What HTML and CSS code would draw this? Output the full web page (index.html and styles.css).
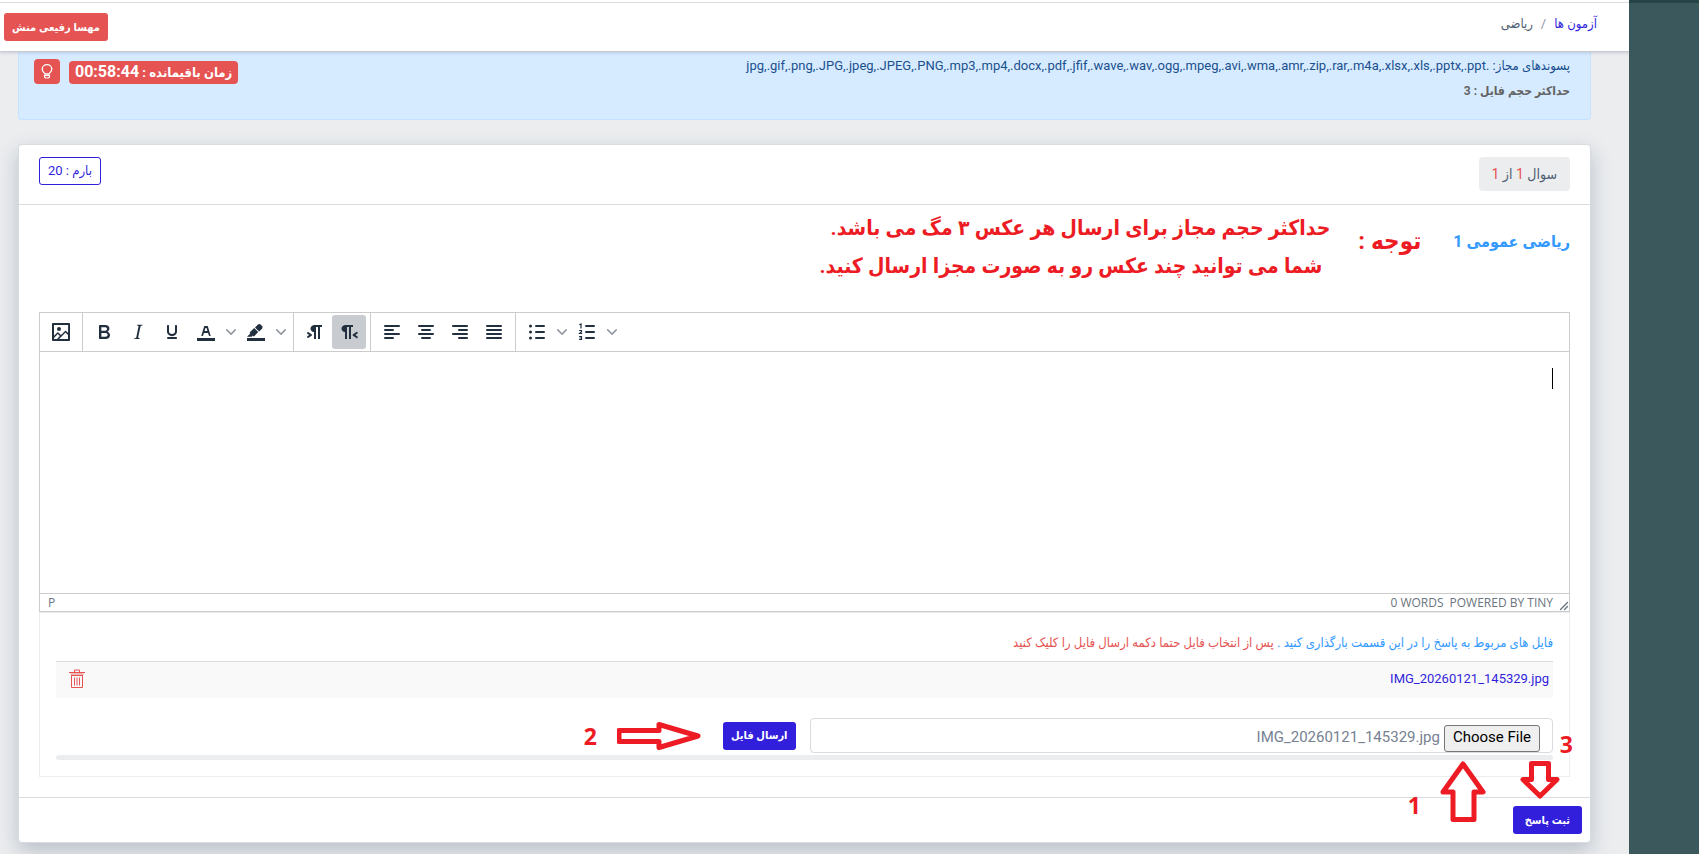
FILE: index.html
```html
<!DOCTYPE html>
<html lang="fa" dir="rtl">
<head>
<meta charset="utf-8">
<title>ریاضی</title>
<link rel="stylesheet" href="styles.css">
</head>
<body>
<div class="page">
  <aside class="side"></aside>
  <div class="main">
    <header class="topbar">
      <nav class="crumbs">
        <a href="#">آزمون ها</a><span class="crumb-sep">/</span><span class="crumb-now">ریاضی</span>
      </nav>
      <button class="btn btn-danger user-btn" type="button">مهسا رفیعی منش</button>
    </header>

    <main class="content">
      <section class="alert">
        <div class="alert-text">
          <p class="exts">پسوندهای مجاز: <bdo dir="ltr">jpg,.gif,.png,.JPG,.jpeg,.JPEG,.PNG,.mp3,.mp4,.docx,.pdf,.jfif,.wave,.wav,.ogg,.mpeg,.avi,.wma,.amr,.zip,.rar,.m4a,.xlsx,.xls,.pptx,.ppt.</bdo></p>
          <p class="max-size">حداکثر حجم فایل : 3</p>
        </div>
        <div class="alert-tools">
          <strong class="timer">زمان باقیمانده : <span class="clock">00:58:44</span></strong>
          <button class="btn-danger bulb" type="button" aria-label="راهنما">
            <svg width="12" height="16" viewBox="0 0 12 16" fill="none" stroke="currentColor"><path d="M4 10C4 8.700 1.200 8.300 1.200 5.200A4.800 4.500 0 0 1 10.800 5.200C10.800 8.300 8 8.700 8 10Z" stroke-width="1.300"/><path d="M3.500 11.500h5v1.500l-1 1h-3l-1-1z" stroke-width="1.200"/></svg>
          </button>
        </div>
      </section>

      <section class="card">
        <div class="card-head">
          <span class="counter">سوال <b>1</b> از <b>1</b></span>
          <span class="score">بارم : 20</span>
        </div>

        <div class="card-body">
          <div class="question">
            <h1 class="question-title">ریاضی عمومی 1</h1>
            <strong class="notice-label">توجه :</strong>
            <p class="notice">حداکثر حجم مجاز برای ارسال هر عکس ۳ مگ می باشد.<br><span class="notice-second">شما می توانید چند عکس رو به صورت مجزا ارسال کنید.</span></p>
          </div>

          <div class="editor">
            <div class="toolbar" dir="ltr">
              <div class="group">
                <button class="tool" type="button" aria-label="Image"><svg class="ico" viewBox="0 0 24 24"><path d="m5 15.700 3.300-3.200c.3-.3.7-.3 1 0L12 15l4.100-4c.3-.4.8-.4 1 0l2 1.900V5H5v10.700ZM5 18V19h3l2.800-2.900-2-2L5 17.900Zm14-3-2.500-2.400-6.400 6.500H19v-4ZM4 3h16c.6 0 1 .4 1 1v16c0 .6-.4 1-1 1H4a1 1 0 0 1-1-1V4c0-.6.4-1 1-1Zm6 8a2 2 0 1 0 0-4 2 2 0 0 0 0 4Z"/></svg></button>
              </div>
              <div class="group">
                <button class="tool" type="button" aria-label="Bold"><svg class="ico" viewBox="0 0 24 24"><path fill-rule="evenodd" d="M7.800 19c-.3 0-.5 0-.6-.2l-.2-.5V5.700c0-.2 0-.4.2-.5l.6-.2h5c1.500 0 2.700.3 3.500 1 .7.6 1.100 1.400 1.100 2.500a3 3 0 0 1-.6 1.900c-.4.6-1 1-1.600 1.200.4.1.9.3 1.300.6s.8.7 1 1.200c.4.4.5 1 .5 1.600 0 1.300-.4 2.300-1.300 3-.8.7-2.100 1-3.800 1H7.800Zm5-8.300c.6 0 1.200-.1 1.600-.5.4-.3.6-.7.6-1.300 0-1.100-.8-1.700-2.300-1.700H9.300v3.500h3.400Zm.5 6c.7 0 1.300-.1 1.700-.4.4-.4.6-.9.6-1.500s-.2-1-.7-1.400c-.4-.3-1-.4-2-.4H9.400v3.800h4Z"/></svg></button>
                <button class="tool" type="button" aria-label="Italic"><svg class="ico" viewBox="0 0 24 24"><path d="m16.700 4.700-.1.900h-.3c-.6 0-1 0-1.400.3-.3.3-.4.6-.5 1.100l-2.100 9.800v.6c0 .5.4.8 1.400.8h.2l-.2.800H8l.2-.8h.2c1.100 0 1.800-.5 2-1.500l2-9.800.1-.5c0-.6-.4-.8-1.400-.8h-.3l.2-.9h5.800Z"/></svg></button>
                <button class="tool" type="button" aria-label="Underline"><svg class="ico" viewBox="0 0 24 24"><path d="M16 5c.6 0 1 .4 1 1v5.500a4 4 0 0 1-.4 1.800l-1 1.400a5.300 5.300 0 0 1-5.500 1 5 5 0 0 1-1.600-1c-.5-.4-.8-.9-1.100-1.400a4 4 0 0 1-.4-1.800V6c0-.6.4-1 1-1s1 .4 1 1v5.500c0 .3 0 .6.2 1l.6.700a3.300 3.300 0 0 0 2.200.800 3.400 3.400 0 0 0 2.200-.8c.3-.2.4-.5.6-.8l.2-.9V6c0-.6.4-1 1-1ZM8 17h8c.6 0 1 .4 1 1s-.4 1-1 1H8a1 1 0 0 1 0-2Z"/></svg></button>
                <button class="tool" type="button" aria-label="Text color"><svg class="ico" viewBox="0 0 24 24"><path d="M3 18h18v3H3z"/><path fill-rule="evenodd" d="M8.700 16h-.8a.5.5 0 0 1-.5-.6l2.700-9c.1-.3.3-.4.5-.4h2.800c.2 0 .4.1.5.4l2.700 9a.5.5 0 0 1-.5.6h-.8a.5.5 0 0 1-.4-.4l-.7-2.200c0-.3-.3-.4-.5-.4h-3.400c-.2 0-.4.1-.5.4l-.7 2.200c0 .3-.2.4-.4.4Zm2.600-7.600-.6 2a.5.5 0 0 0 .5.6h1.600a.5.5 0 0 0 .5-.6l-.6-2c0-.3-.3-.4-.5-.4h-.4c-.2 0-.4.1-.5.4Z"/></svg></button>
                <button class="chev" type="button" aria-label="Text color menu"><svg width="10" height="10" viewBox="0 0 10 10"><path d="M8.700 2.200c.3-.3.8-.3 1 0 .4.4.4.9 0 1.200L5.700 7.800c-.3.3-.9.3-1.200 0L.2 3.400a.8.8 0 0 1 0-1.200c.3-.3.8-.3 1.100 0L5 6l3.700-3.800Z"/></svg></button>
                <button class="tool" type="button" aria-label="Highlight"><svg class="ico" viewBox="0 0 24 24"><path d="M3 18h18v3H3z"/><path d="M7.700 16.700H3l3.300-3.300-.7-.8L10.200 8l4 4.100-4 4.200c-.2.2-.6.2-.8 0l-.6-.7-1.100 1.100zm5-7.500L11 7.400l3-2.900a2 2 0 0 1 2.600 0L18 6c.7.7.7 2 0 2.700l-2.900 2.900-1.800-1.800-.5-.6"/></svg></button>
                <button class="chev" type="button" aria-label="Highlight menu"><svg width="10" height="10" viewBox="0 0 10 10"><path d="M8.700 2.200c.3-.3.8-.3 1 0 .4.4.4.9 0 1.200L5.700 7.800c-.3.3-.9.3-1.200 0L.2 3.400a.8.8 0 0 1 0-1.200c.3-.3.8-.3 1.100 0L5 6l3.700-3.800Z"/></svg></button>
              </div>
              <div class="group">
                <button class="tool" type="button" aria-label="Left to right"><svg class="ico" viewBox="0 0 24 24"><path d="M11 5h8v2h-2v12h-2V7h-2v12h-2v-7c-.5 0-1 0-1.400-.3A3.400 3.400 0 0 1 7.800 10a3.300 3.300 0 0 1 0-2.800 3.400 3.400 0 0 1 1.800-1.800L11 5ZM4.400 16.200 6.200 15l-1.800-1.200a1 1 0 0 1 1.200-1.600l3 2a1 1 0 0 1 0 1.600l-3 2a1 1 0 1 1-1.200-1.600Z"/></svg></button>
                <button class="tool tool-on" type="button" aria-pressed="true" aria-label="Right to left"><svg class="ico" viewBox="0 0 24 24"><path d="M8 5h8v2h-2v12h-2V7h-2v12H8v-7c-.5 0-1 0-1.400-.3A3.400 3.400 0 0 1 4.800 10a3.300 3.300 0 0 1 0-2.800 3.400 3.400 0 0 1 1.800-1.800L8 5Zm12 11.200a1 1 0 1 1-1 1.600l-3-2a1 1 0 0 1 0-1.600l3-2a1 1 0 1 1 1 1.600L18.400 15l1.800 1.200Z"/></svg></button>
              </div>
              <div class="group">
                <button class="tool" type="button" aria-label="Align left"><svg class="ico line" viewBox="0 0 24 24"><path d="M5 6h14M5 10h8M5 14h14M5 18h8"/></svg></button>
                <button class="tool" type="button" aria-label="Align center"><svg class="ico line" viewBox="0 0 24 24"><path d="M5 6h14M8 10h8M5 14h14M8 18h8"/></svg></button>
                <button class="tool" type="button" aria-label="Align right"><svg class="ico line" viewBox="0 0 24 24"><path d="M5 6h14M11 10h8M5 14h14M11 18h8"/></svg></button>
                <button class="tool" type="button" aria-label="Justify"><svg class="ico line" viewBox="0 0 24 24"><path d="M5 6h14M5 10h14M5 14h14M5 18h14"/></svg></button>
              </div>
              <div class="group group-last">
                <button class="tool" type="button" aria-label="Bullet list"><svg class="ico line" viewBox="0 0 24 24"><path d="M11 6h8M11 12h8M11 18h8"/><path d="M5.500 6h.01M5.500 12h.01M5.500 18h.01" stroke-width="3"/></svg></button>
                <button class="chev" type="button" aria-label="Bullet list menu"><svg width="10" height="10" viewBox="0 0 10 10"><path d="M8.700 2.200c.3-.3.8-.3 1 0 .4.4.4.9 0 1.200L5.700 7.800c-.3.3-.9.3-1.200 0L.2 3.400a.8.8 0 0 1 0-1.200c.3-.3.8-.3 1.100 0L5 6l3.700-3.800Z"/></svg></button>
                <button class="tool" type="button" aria-label="Numbered list"><svg class="ico line" viewBox="0 0 24 24"><path d="M11 6h8M11 12h8M11 18h8"/><path d="M4.800 4.600 6 4v4M4.500 10.500h2v1.300l-1.800 1.700h2M4.500 16.500h2v3h-2M5 18h1.500" stroke-width="1.200"/></svg></button>
                <button class="chev" type="button" aria-label="Numbered list menu"><svg width="10" height="10" viewBox="0 0 10 10"><path d="M8.700 2.200c.3-.3.8-.3 1 0 .4.4.4.9 0 1.200L5.700 7.800c-.3.3-.9.3-1.200 0L.2 3.400a.8.8 0 0 1 0-1.200c.3-.3.8-.3 1.100 0L5 6l3.700-3.800Z"/></svg></button>
              </div>
            </div>
            <div class="edit-area">
              <textarea class="edit-text" aria-label="پاسخ"></textarea>
              <span class="caret"></span>
            </div>
            <div class="status" dir="ltr">
              <span class="path">P</span>
              <span>0 WORDS</span>
              <a class="brand" href="#">POWERED BY TINY</a>
              <svg class="grip" width="10" height="10" viewBox="0 0 10 10"><path d="M1.500 8.500l7-7M5.500 8.500l3-3" stroke="currentColor" stroke-width="1.400" stroke-linecap="round"/></svg>
            </div>
          </div>

          <div class="upload">
            <p class="upload-hint">فایل های مربوط به پاسخ را در این قسمت بارگذاری کنید . <span>پس از انتخاب فایل حتما دکمه ارسال فایل را کلیک کنید</span></p>
            <div class="file-row">
              <a href="#">IMG_20260121_145329.jpg</a>
              <button class="trash" type="button" aria-label="حذف">
                <svg width="16" height="20" viewBox="0 0 16 20" fill="none" stroke="currentColor"><path d="M0 3.500h16M5.500 3V1h5v2M2 6.500h12M2.500 6v12.500h11V6M5.500 8.500v8M8 8.500v8M10.500 8.500v8"/><path d="M1.500 5h13" stroke-width="2" opacity=".4"/></svg>
              </button>
            </div>
            <div class="send-row">
              <input class="file-input" id="answer-file" type="file" aria-label="انتخاب فایل">
              <button class="btn btn-primary send-btn" type="button">ارسال فایل</button>
              <svg class="arrow-send" width="84" height="28" viewBox="0 0 84 28"><path d="M2 8.500H42V2.500L81 14 42 25.500V19.500H2Z"/></svg>
              <span class="step">2</span>
            </div>
            <div class="progress"></div>
            <svg class="mark arrow-choose" width="46" height="62" viewBox="0 0 46 62"><path d="M23 3 43 31H34V58.500H13V31H3Z"/></svg>
            <span class="mark step step-one">1</span>
            <svg class="mark arrow-submit" width="40" height="38" viewBox="0 0 40 38"><path d="M11.500 2.500H28.500V18.500H37L20 35 3 18.500H11.500Z"/></svg>
            <span class="mark step step-three">3</span>
          </div>
        </div>

        <div class="card-foot">
          <button class="btn btn-primary submit-btn" type="button">ثبت پاسخ</button>
        </div>
      </section>
    </main>
  </div>
</div>
<script src="script.js"></script>
</body>
</html>
```
FILE: styles.css
```css
* { box-sizing: border-box; }

body {
  margin: 0;
  font-family: Roboto, "DejaVu Sans Condensed", "DejaVu Sans", sans-serif;
  font-size: 13px;
  line-height: 20px;
  color: #4f5d73;
  background: #ebedef;
}

p, h1 { margin: 0; }
a { color: #321fdb; text-decoration: none; }
button { font-family: inherit; cursor: pointer; }

.page { display: flex; min-height: 100vh; }
.side { flex: 0 0 70px; background: #3b595c; border-top: 3px solid #264547; }
.main { flex: 1; min-width: 0; }

.topbar {
  position: relative;
  display: flex;
  justify-content: space-between;
  align-items: flex-start;
  height: 52px;
  padding: 10px 32px 0 4px;
  background: #fff;
  border-bottom: 1px solid #c8ccd2;
  box-shadow: inset 0 2px #fff, inset 0 3px #d8dbe0, 0 1px 3px rgba(60, 75, 100, .2);
}
.crumbs { display: flex; gap: 8px; padding-top: 4px; font-size: 13px; }
.crumb-sep { color: #8a93a2; }

.btn {
  height: 28px;
  padding: 0 8px;
  border: 0;
  border-radius: 3px;
  color: #fff;
  font-size: 11px;
  font-weight: bold;
  white-space: nowrap;
}
.btn-danger { background: #e55353; color: #fff; border: 0; }
.btn-primary { background: #321fdb; }
.user-btn { margin-top: 3px; }

.content { padding: 0 38px 11px 18px; }

.alert {
  display: flex;
  justify-content: space-between;
  height: 68px;
  padding: 0 20px 0 15px;
  background: #d6ebff;
  border: 1px solid #c6e2ff;
  border-top: 0;
  border-radius: 0 0 4px 4px;
  color: #1b508f;
}
.exts { padding-top: 4px; }
.max-size { margin-top: 5px; font-size: 12px; font-weight: bold; color: #636363; }
.alert-tools { display: flex; gap: 9px; padding-top: 7px; }
.timer {
  height: 23px;
  margin-top: 2px;
  padding: 0 6px;
  border-radius: 4px;
  background: #e55353;
  color: #fff;
  font-size: 13px;
  line-height: 22px;
}
.clock { font-size: 16px; }
.bulb { display: grid; place-items: center; width: 26px; height: 25px; padding: 0; border-radius: 4px; }

.card {
  margin-top: 24px;
  background: #fff;
  border: 1px solid #d8dbe0;
  border-radius: 4px;
  box-shadow: 0 8px 20px rgba(60, 75, 100, .28);
}
.card-head {
  display: flex;
  justify-content: space-between;
  align-items: flex-start;
  height: 60px;
  padding: 12px 20px;
  border-bottom: 1px solid #d8dbe0;
}
.counter { padding: 0 13px; border-radius: 4px; background: #ebedef; font-size: 14px; line-height: 34px; }
.counter b { color: #e55353; font-weight: 400; }
.score { padding: 0 8px; border: 1px solid #321fdb; border-radius: 3px; color: #321fdb; font-size: 13px; line-height: 26px; }

.card-body { padding: 0 20px 20px; }
.question { display: flex; height: 107px; padding-top: 4px; }
.question-title { padding-top: 21px; font-size: 16px; font-weight: bold; line-height: 24px; color: #39f; }
.notice-label { margin-right: 32px; padding-top: 18px; font-size: 24px; line-height: 28px; color: #ed1c24; }
.notice { margin-right: 28px; font-size: 21px; font-weight: bold; line-height: 38px; color: #ed1c24; }
.notice-second { padding-right: 8px; }

.editor { border: 1px solid #ccc; }
.toolbar { display: flex; height: 39px; border-bottom: 1px solid #ccc; }
.group { display: flex; padding: 2px 4px 0; border-right: 1px solid #ccc; }
.group-last { border-right: 0; }
.tool, .chev { display: grid; place-items: center; height: 34px; padding: 0; border: 0; border-radius: 3px; background: none; }
.tool { width: 34px; }
.tool-on { background: #c8cbcf; }
.chev { width: 16px; fill: #9298a0; }
.ico { width: 24px; height: 24px; fill: #222f3e; }
.line { fill: none; stroke: #222f3e; stroke-width: 2; stroke-linecap: round; }

.edit-area { position: relative; height: 241px; }
.edit-text { display: block; width: 100%; height: 100%; padding: 16px; border: 0; outline: 0; resize: none; font: inherit; font-size: 16px; }
.caret { position: absolute; top: 16px; right: 16px; width: 1px; height: 21px; background: #000; }
.status {
  display: flex;
  align-items: center;
  gap: 6px;
  height: 18px;
  padding: 0 0 0 8px;
  border-top: 1px solid #ccc;
  color: #6b7480;
  font-family: "Open Sans", "Noto Sans", sans-serif;
  font-size: 12px;
}
.path { flex: 1; }
.brand { color: inherit; }
.grip { align-self: flex-end; }

.upload { position: relative; padding: 20px 16px 16px; border: 1px solid #ebedef; }
.upload-hint { font-size: 13px; color: #39f; }
.upload-hint span { color: #e55353; }
.file-row {
  display: flex;
  justify-content: space-between;
  height: 37px;
  margin-top: 8px;
  padding: 7px 4px 0 13px;
  border-top: 1px solid #d8dbe0;
  background: #f9f9f9;
}
.trash { display: flex; height: 20px; padding: 0; border: 0; background: none; color: #e55353; }
.send-row { display: flex; align-items: center; margin-top: 20px; }
.file-input {
  width: calc(50% - 5px);
  height: 35px;
  padding: 6px 12px;
  border: 1px solid #d8dbe0;
  border-radius: 4px;
  font-family: inherit;
  font-size: 15px;
  color: #768192;
}
.file-input::file-selector-button {
  height: 27px;
  margin: 0 0 0 4px;
  padding: 0 8px 4px;
  border: 1px solid #767676;
  border-radius: 3px;
  background: #efefef;
  color: #000;
  font: inherit;
}
.send-btn { margin-right: 14px; }
.submit-btn { padding: 0 12px; }
.arrow-send { margin-right: 22px; }
.arrow-send path, .mark path { fill: #fff; stroke: #ed1c24; stroke-width: 5; stroke-linejoin: round; }
.step { font-family: "Open Sans", sans-serif; font-size: 23px; font-weight: bold; line-height: 24px; color: #ed1c24; }
.send-row .step { margin-right: 20px; }
.progress { height: 5px; margin-top: 2px; border-radius: 3px; background: #ebedef; }

.mark { position: absolute; }
.arrow-choose { top: 148px; right: 83px; }
.step-one { top: 180px; right: 148px; }
.arrow-submit { top: 148px; right: 9px; z-index: 1; }
.step-three { top: 119px; right: -4px; }

.card-foot { padding: 8px; border-top: 1px solid #d8dbe0; }
```
FILE: script.js
```js
const picked = new DataTransfer();
picked.items.add(new File(["image"], "IMG_20260121_145329.jpg", { type: "image/jpeg" }));
document.getElementById("answer-file").files = picked.files;
```
